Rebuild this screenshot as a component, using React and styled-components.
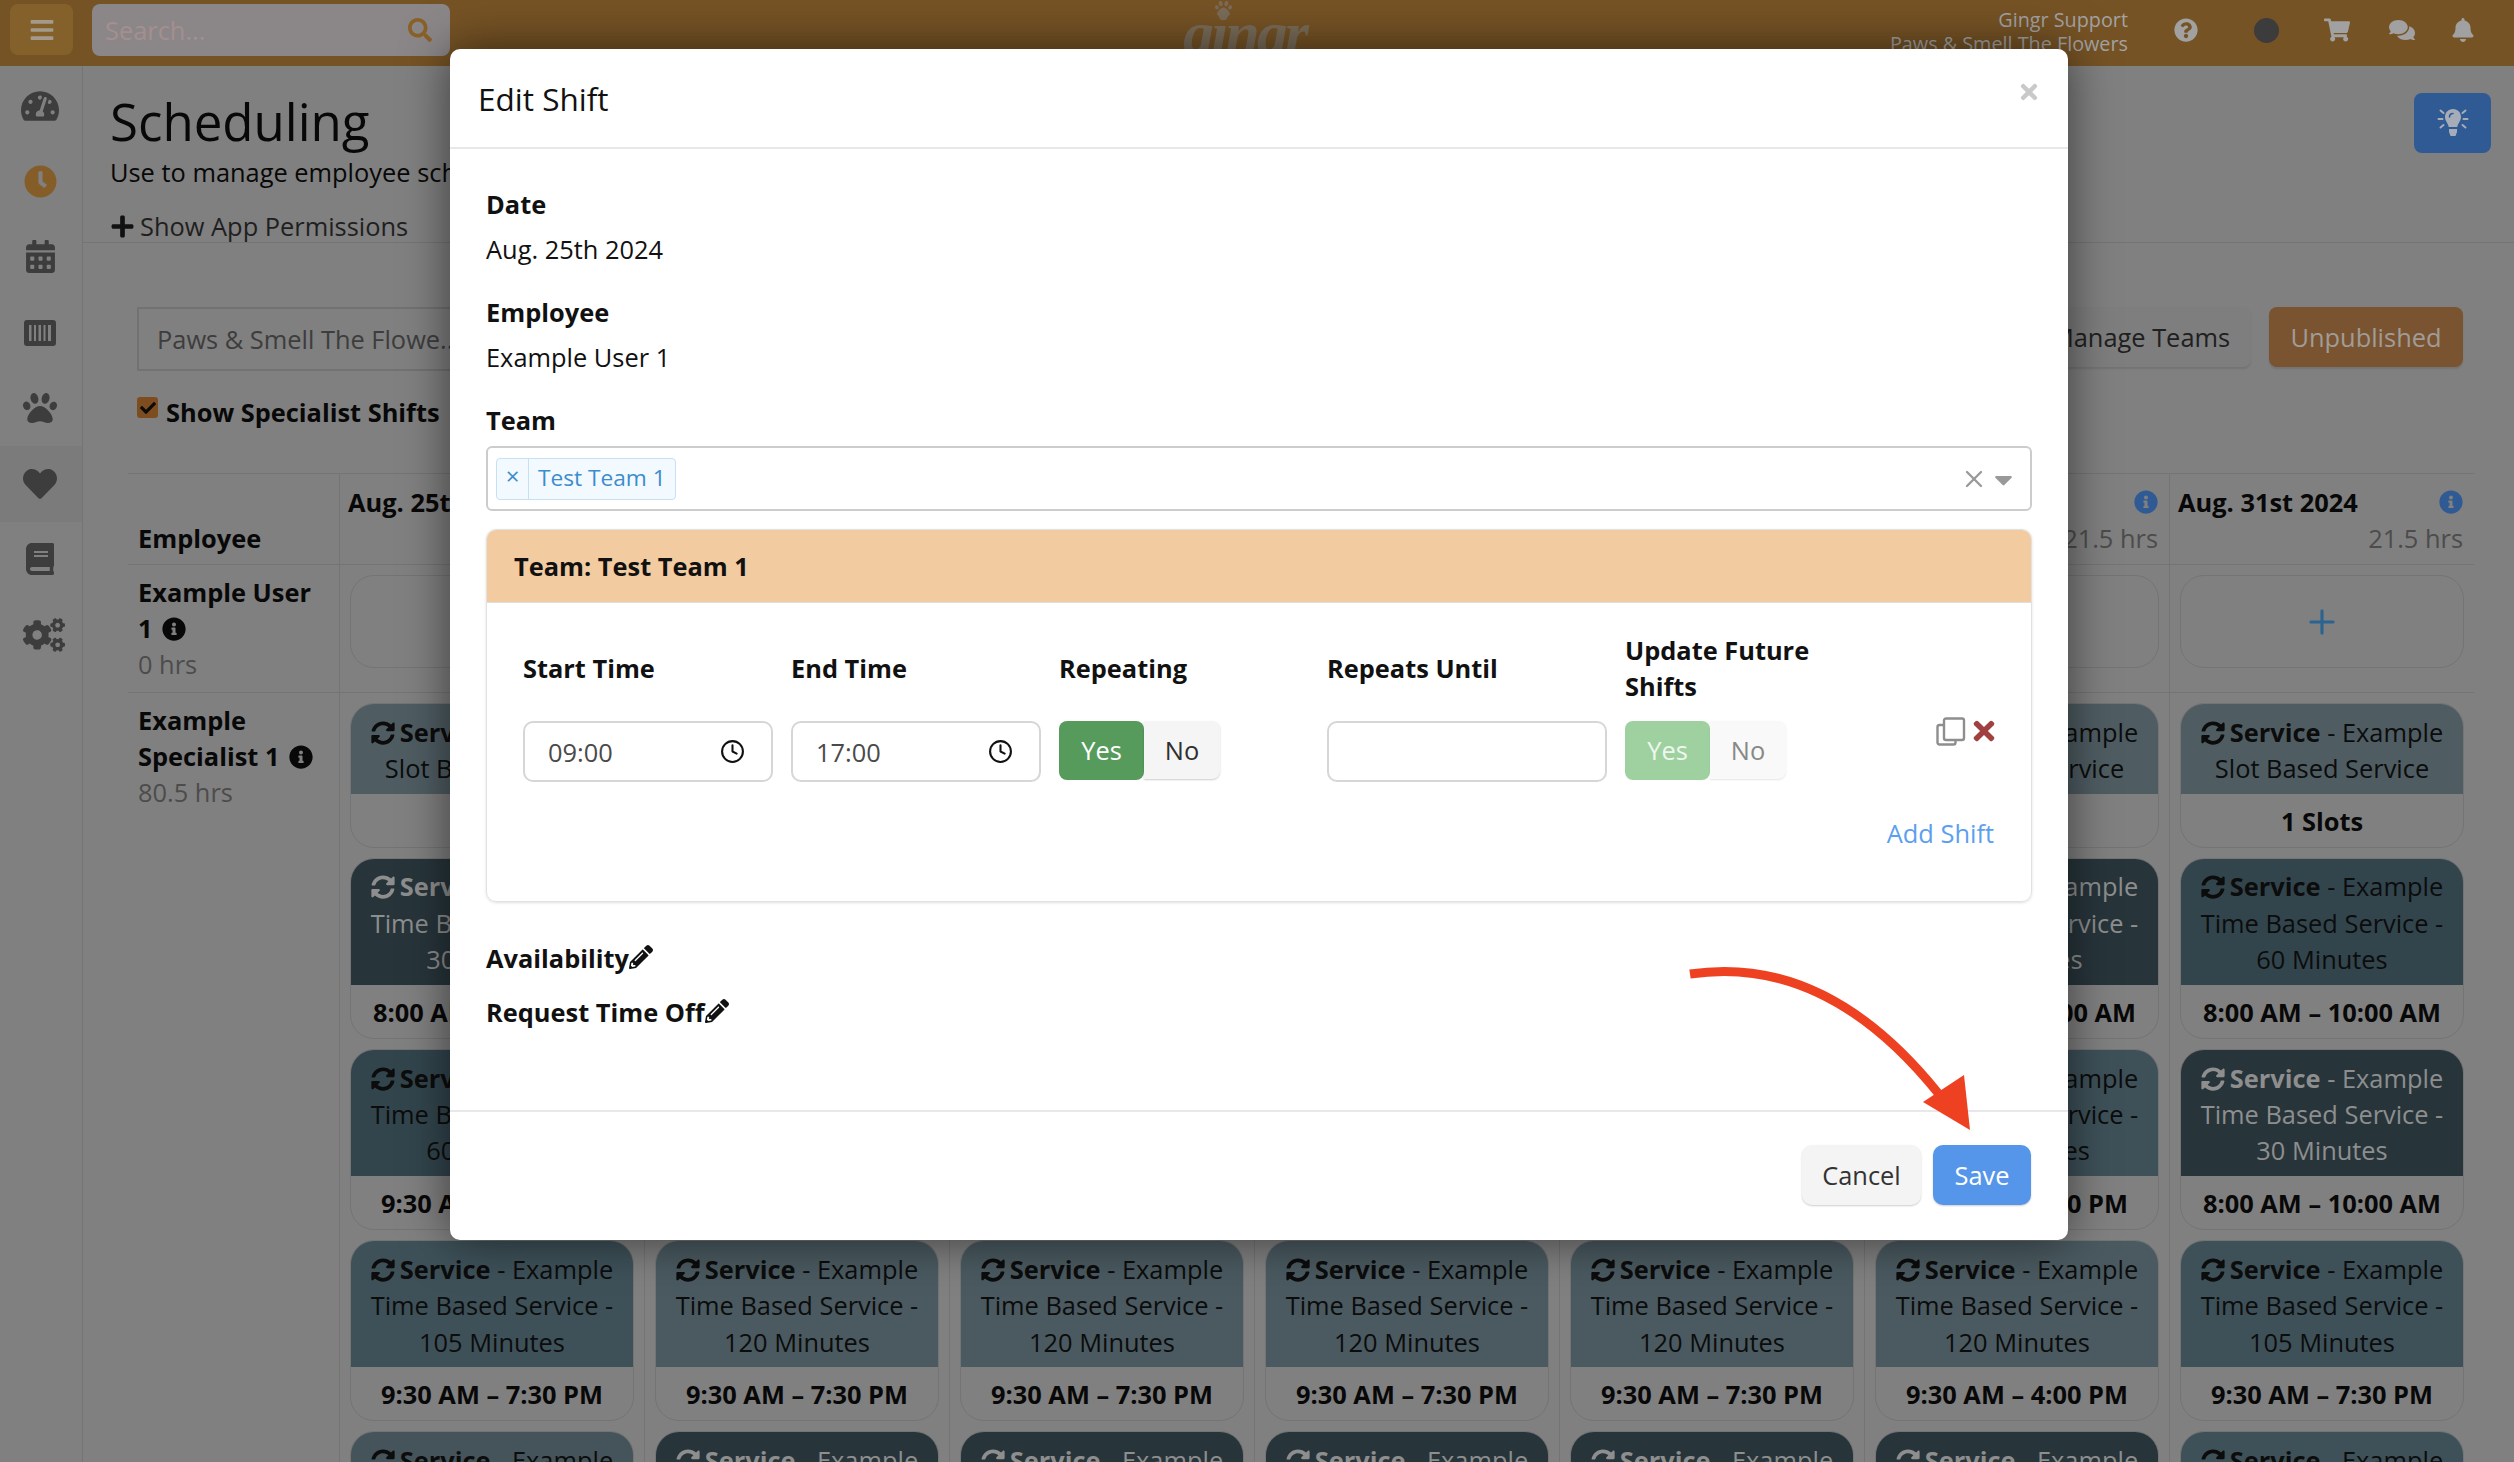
import styled, { createGlobalStyle } from 'styled-components';
import {
  FaBars, FaSearch, FaQuestionCircle, FaShoppingCart, FaComments, FaBell, FaTachometerAlt, FaClock,
  FaCalendarAlt, FaPaw, FaHeart, FaBook, FaCogs, FaPlus, FaInfoCircle, FaSyncAlt, FaTimes, FaCheck,
  FaPencilAlt, FaCaretDown,
} from 'react-icons/fa';
import { FiClock, FiPlus, FiX } from 'react-icons/fi';

const GlobalStyle = createGlobalStyle`
  html, body { margin: 0; padding: 0; }
  body {
    width: 2514px;
    height: 1462px;
    overflow: hidden;
    background: #808080;
    font-family: "Open Sans", "Noto Sans", sans-serif;
    font-size: 25.4px;
    line-height: 36px;
    color: #080808;
  }
  * { box-sizing: border-box; }
`;

const Page = styled.div`
  position: relative;
  width: 2514px;
  height: 1462px;
  overflow: hidden;
`;

const TopBar = styled.header`
  display: flex;
  align-items: flex-start;
  height: 66px;
  padding: 4px 6px 0 10px;
  background: #765325;
`;

const MenuButton = styled.div`
  display: flex;
  align-items: center;
  justify-content: center;
  width: 63px;
  height: 51px;
  border-radius: 8px;
  background: #84602a;
  color: #a39a8b;
  font-size: 26px;
`;

const SearchBox = styled.div`
  display: flex;
  align-items: center;
  justify-content: space-between;
  width: 358px;
  height: 52px;
  margin-left: 19px;
  padding: 0 18px 0 13px;
  border-radius: 8px;
  background: #8b8688;
  color: #a58f8f;
  svg { color: #8a6228; font-size: 24px; }
`;

const Logo = styled.div`
  position: relative;
  margin-left: 733px;
  width: 119px;
  height: 60px;
  color: #7a6c59;
  font-family: "Liberation Serif", serif;
  font-style: italic;
  font-weight: 700;
  font-size: 62px;
  line-height: 58px;
  letter-spacing: -3px;
  svg {
    position: absolute;
    left: 32px;
    top: -4px;
    font-size: 17px;
  }
`;

const UserInfo = styled.div`
  margin-left: auto;
  margin-top: 4px;
  color: #a3a3a3;
  font-size: 19.8px;
  line-height: 24px;
  text-align: right;
  white-space: nowrap;
`;

const TopIcon = styled.div`
  display: flex;
  align-items: center;
  justify-content: center;
  width: ${(p) => p.$w}px;
  height: 52px;
  color: #a1a1a1;
  font-size: ${(p) => p.$size || 26}px;
`;

const Avatar = styled.span`
  width: 25px;
  height: 25px;
  border-radius: 50%;
  background: #3c3c3c;
`;

const Layout = styled.div`
  display: flex;
  height: 1396px;
`;

const Sidebar = styled.nav`
  flex: 0 0 83px;
  padding-top: 2px;
  border-right: 1px solid #747474;
`;

const NavItem = styled.div`
  display: flex;
  align-items: center;
  justify-content: center;
  height: 75.6px;
  padding-right: 2px;
  padding-left: ${(p) => p.$shift || 0}px;
  color: ${(p) => (p.$active ? '#845d28' : '#3d3d3d')};
  background: ${(p) => (p.$selected ? '#7b7b7b' : 'transparent')};
  font-size: ${(p) => p.$size || 32}px;
`;

const Main = styled.main`
  flex: 1;
  min-width: 0;
`;

const PageHeader = styled.div`
  display: flex;
  justify-content: space-between;
  height: 177px;
  padding: 19px 23px 0 27px;
  border-bottom: 1px solid #747474;
`;

const Title = styled.h1`
  margin: 0;
  font-size: 51px;
  font-weight: 400;
  line-height: 72px;
`;

const Subtitle = styled.p`
  margin: -3px 0 0;
`;

const PermissionLink = styled.div`
  display: flex;
  align-items: center;
  gap: 5px;
  margin-top: 18px;
  color: #1f1f1f;
  svg { font-size: 25px; color: #111; }
`;

const TipButton = styled.div`
  display: flex;
  align-items: center;
  justify-content: center;
  width: 77px;
  height: 60px;
  margin-top: 8px;
  border-radius: 8px;
  background: #2f5a94;
`;

const Controls = styled.div`
  height: 230px;
  padding: 64px 51px 0 54px;
`;

const ControlRow = styled.div`
  display: flex;
  justify-content: space-between;
`;

const LocationSelect = styled.div`
  width: 340px;
  height: 64px;
  padding: 12px 18px;
  border: 2px solid #727272;
  color: #3d3d3d;
  white-space: nowrap;
`;

const ControlButtons = styled.div`
  display: flex;
  gap: 18px;
`;

const PageButton = styled.div`
  width: ${(p) => p.$w}px;
  height: 60px;
  border-radius: 8px;
  background: ${(p) => p.$bg};
  color: ${(p) => p.$color};
  box-shadow: 0 2px 2px rgba(0, 0, 0, 0.1);
  line-height: 61px;
  text-align: center;
`;

const CheckRow = styled.label`
  display: flex;
  align-items: center;
  gap: 8px;
  margin-top: 23px;
  font-weight: 700;
`;

const CheckBox = styled.span`
  display: flex;
  align-items: center;
  justify-content: center;
  width: 21px;
  height: 21px;
  margin-top: -9px;
  border-radius: 3px;
  background: #7d4d20;
  color: #0b0b0b;
  font-size: 16px;
`;

const Table = styled.div`
  margin-left: 45px;
  width: 2346px;
  border-top: 1px solid #747474;
`;

const Row = styled.div`
  display: grid;
  grid-template-columns: 211px repeat(7, 305px);
  height: ${(p) => (p.$h ? `${p.$h}px` : 'auto')};
  border-bottom: ${(p) => (p.$last ? 'none' : '1px solid #747474')};
`;

const EmployeeHead = styled.div`
  align-self: end;
  padding: 0 0 8px 10px;
  font-weight: 700;
`;

const DayCell = styled.div`
  display: flex;
  flex-wrap: wrap;
  justify-content: space-between;
  align-content: flex-start;
  padding: 10px 11px 0 8px;
  border-left: 1px solid #747474;
`;

const DayName = styled.span`
  font-weight: 700;
`;

const DayInfo = styled.span`
  display: flex;
  align-items: center;
  color: #2f5a94;
  font-size: 24px;
`;

const DayHours = styled.span`
  flex: 0 0 100%;
  color: #4c4c4c;
  text-align: right;
`;

const EmployeeCell = styled.div`
  padding: 9px 22px 0 10px;
`;

const EmployeeName = styled.div`
  font-weight: 700;
  svg { margin-left: 3px; font-size: 24px; vertical-align: -3px; }
`;

const EmployeeHours = styled.div`
  color: #4c4c4c;
`;

const CardCell = styled.div`
  display: flex;
  flex-direction: column;
  gap: 10px;
  padding: 10px 10px 0;
  border-left: 1px solid #747474;
  overflow: hidden;
`;

const EmptyCard = styled.div`
  display: flex;
  align-items: center;
  justify-content: center;
  height: 93px;
  border: 1px solid #747474;
  border-radius: 24px;
  color: #2b6391;
  font-size: 38px;
`;

const Card = styled.div`
  flex: none;
  border: 1px solid #747474;
  border-radius: 24px;
  overflow: hidden;
  text-align: center;
`;

const CardTop = styled.div`
  padding: 9.5px 10px 7.5px;
  background: ${(p) => p.$bg};
  color: ${(p) => (p.$light ? '#8e8e8e' : '#0c0c0c')};
  line-height: 36.4px;
  svg { margin-right: 5px; font-size: 24px; vertical-align: -3px; }
`;

const CardBottom = styled.div`
  height: 53px;
  font-weight: 700;
  line-height: 54px;
`;

const Modal = styled.div`
  position: absolute;
  left: 450px;
  top: 49px;
  display: flex;
  flex-direction: column;
  width: 1618px;
  height: 1191px;
  border-radius: 10px;
  background: #fff;
  box-shadow: 0 0 48px rgba(0, 0, 0, 0.55);
  color: #111;
`;

const ModalHeader = styled.div`
  display: flex;
  justify-content: space-between;
  height: 100px;
  padding: 32px 27px 0 28px;
  border-bottom: 2px solid #e8e8e8;
`;

const ModalTitle = styled.div`
  font-size: 31.5px;
`;

const CloseIcon = styled.div`
  margin-top: -4px;
  color: #c9c9c9;
  font-size: 24px;
`;

const ModalBody = styled.div`
  padding: 37px 36px 0 36px;
`;

const Label = styled.div`
  font-weight: 700;
  margin-bottom: 9px;
`;

const Value = styled.div`
  margin-bottom: 27px;
`;

const TeamLabel = styled(Label)`
  margin-bottom: 8px;
`;

const TeamSelect = styled.div`
  display: flex;
  align-items: center;
  justify-content: space-between;
  height: 65px;
  padding: 0 12px 0 8px;
  border: 2px solid #cccccc;
  border-radius: 6px;
`;

const Tag = styled.div`
  display: flex;
  width: 180px;
  height: 42px;
  border: 1px solid #c6e1f5;
  border-radius: 4px;
  background: #f2f9ff;
  color: #3d8ccc;
  font-size: 22.7px;
  line-height: 38px;
`;

const TagRemove = styled.span`
  width: 32px;
  border-right: 1px solid #c6e1f5;
  font-size: 24px;
  line-height: 34px;
  text-align: center;
`;

const TagText = styled.span`
  padding-left: 9px;
`;

const SelectTools = styled.div`
  display: flex;
  align-items: center;
  gap: 1px;
  color: #999;
  font-size: 28px;
`;

const ToolCaret = styled.span`
  display: flex;
  font-size: 29px;
  margin-top: 2px;
`;

const TeamPanel = styled.div`
  height: 373px;
  margin-top: 18px;
  border: 1px solid #e2e2e2;
  border-radius: 10px;
  box-shadow: 0 1px 3px rgba(0, 0, 0, 0.12);
  overflow: hidden;
`;

const TeamPanelHead = styled.div`
  height: 73px;
  padding-left: 27px;
  background: #f3cba0;
  border-bottom: 1px solid #e2ddd8;
  font-weight: 700;
  line-height: 73px;
`;

const TeamPanelBody = styled.div`
  padding: 29px 37px 0 36px;
`;

const ShiftGrid = styled.div`
  display: grid;
  grid-template-columns: 250px 250px 250px 280px 1fr;
  grid-template-rows: 72px 61px;
  column-gap: 18px;
  row-gap: 17px;
  align-items: center;
`;

const ShiftLabel = styled.div`
  font-weight: 700;
`;

const ShiftLabelWide = styled(ShiftLabel)`
  width: 230px;
`;

const TimeInput = styled.div`
  display: flex;
  align-items: center;
  justify-content: space-between;
  height: 61px;
  padding: 0 26px 0 23px;
  border: 2px solid #d6d6d6;
  border-radius: 10px;
  color: #4a4a4a;
  svg { color: #111; font-size: 25px; }
`;

const ToolCell = styled.div`
  display: flex;
  justify-content: space-between;
  align-self: start;
`;

const Toggle = styled.div`
  display: flex;
  align-self: start;
`;

const ToggleYes = styled.div`
  width: 85px;
  height: 59px;
  border-radius: 8px;
  background: ${(p) => (p.$faded ? '#9fd1a0' : '#569b5c')};
  color: ${(p) => (p.$faded ? '#eef7ee' : '#fff')};
  line-height: 59px;
  text-align: center;
`;

const ToggleNo = styled.div`
  width: 76px;
  height: 58px;
  border-radius: 0 8px 8px 0;
  background: ${(p) => (p.$faded ? '#f9f9f9' : '#f5f5f5')};
  box-shadow: 0 1px 2px rgba(0, 0, 0, ${(p) => (p.$faded ? 0.1 : 0.2)});
  color: ${(p) => (p.$faded ? '#888' : '#2f2f2f')};
  line-height: 59px;
  text-align: center;
`;

const RowTools = styled.div`
  display: flex;
  justify-content: flex-end;
  align-items: center;
  align-self: start;
  gap: 3px;
  margin: -5px -5px 0 0;
  color: #a04040;
  font-size: 30px;
`;

const AddShift = styled.div`
  margin-top: 33px;
  color: #5ba0ef;
  text-align: right;
`;

const EditLine = styled.div`
  display: flex;
  align-items: center;
  margin-top: ${(p) => p.$top}px;
  font-weight: 700;
  svg { font-size: 24px; margin-top: -3px; }
`;

const ModalFooter = styled.div`
  display: flex;
  justify-content: flex-end;
  gap: 12px;
  margin-top: auto;
  height: 130px;
  padding: 33px 37px 0 0;
  border-top: 2px solid #e8e8e8;
`;

const FooterButton = styled.div`
  width: ${(p) => p.$w}px;
  height: 60px;
  border-radius: 10px;
  background: ${(p) => p.$bg};
  color: ${(p) => p.$color};
  box-shadow: 0 1px 2px rgba(0, 0, 0, 0.2);
  line-height: 60px;
  text-align: center;
`;

const Annotation = styled.svg`
  position: absolute;
  left: 1680px;
  top: 960px;
`;

const BarcodeIcon = () => (
  <svg width="32" height="26" viewBox="0 0 32 26" fill="currentColor">
    <path fillRule="evenodd" d="M3 0h26a3 3 0 0 1 3 3v20a3 3 0 0 1-3 3H3a3 3 0 0 1-3-3V3a3 3 0 0 1 3-3zM5 5v16h2.5V5zM10 5v16h2V5zM14.5 5v16h2.5V5zM19.5 5v16h2V5zM24 5v16h3V5z" />
  </svg>
);

const CopyIcon = () => (
  <svg width="30" height="29" viewBox="0 0 30 29" fill="#ffffff" stroke="#8e8e8e" strokeWidth="2.4">
    <rect x="1.5" y="8" width="18" height="19.5" rx="2" />
    <rect x="8" y="1.500" width="20" height="21.500" rx="2" />
  </svg>
);

const BulbIcon = () => (
  <svg width="32" height="30" viewBox="0 0 32 30" fill="none" stroke="#a6adb8" strokeWidth="2" strokeLinecap="round">
    <path d="M1.500 11h4M26.500 11h4M3.500 2.500l3 2.500M28.500 2.500l-3 2.500M3.500 19.500l3-2.500M28.500 19.500l-3-2.500" />
    <path fill="#a6adb8" stroke="none" d="M16 1c-5 0-8 3.800-8 8 0 4 3 6 3.700 10h8.600C21 15 24 13 24 9c0-4.200-3-8-8-8z" />
    <path stroke="#2f5a94" strokeWidth="1.600" d="M12.500 9c0-2 1.500-3.500 3.500-3.500" />
    <path fill="#a6adb8" stroke="none" d="M12 21h8v3l-1.500 4h-5L12 24z" />
  </svg>
);

const navIcons = [
  { icon: <FaTachometerAlt />, size: 38 },
  { icon: <FaClock />, size: 33, active: true },
  { icon: <FaCalendarAlt />, size: 33 },
  { icon: <BarcodeIcon /> },
  { icon: <FaPaw />, size: 34 },
  { icon: <FaHeart />, size: 34, selected: true },
  { icon: <FaBook />, size: 32 },
  { icon: <FaCogs />, size: 42, shift: 8 },
];

const days = ['25th', '26th', '27th', '28th', '29th', '30th', '31st'];

const SLOT = { bg: '#4f5d63', name: 'Slot Based Service', foot: '1 Slots' };
const time = (mins, bg, foot, light) => ({ bg, light, name: `Time Based Service - ${mins} Minutes`, foot });

const MORNING = '8:00 AM – 10:00 AM';
const FULL = '9:30 AM – 7:30 PM';
const SHORT = '9:30 AM – 4:00 PM';
const DARK = '#27353b';
const DEEP = '#32454d';
const MID = '#3e5159';
const PALE = '#4a5a60';

const columns = [
  [SLOT, time(30, DARK, MORNING, true), time(60, DEEP, FULL), time(105, MID, FULL), time(105, '#44545a', FULL)],
  [SLOT, time(30, DARK, MORNING, true), time(60, DEEP, FULL), time(120, PALE, FULL), time(30, DARK, FULL, true)],
  [SLOT, time(30, DARK, MORNING, true), time(60, DEEP, FULL), time(120, PALE, FULL), time(30, DARK, FULL, true)],
  [SLOT, time(30, DARK, MORNING, true), time(60, DEEP, FULL), time(120, PALE, FULL), time(30, DARK, FULL, true)],
  [SLOT, time(30, DARK, MORNING, true), time(60, DEEP, FULL), time(120, PALE, FULL), time(30, DARK, FULL, true)],
  [SLOT, time(30, DARK, MORNING, true), time(105, MID, FULL), time(120, PALE, SHORT), time(30, DARK, FULL, true)],
  [SLOT, time(60, DEEP, MORNING), time(30, DARK, MORNING, true), time(105, MID, FULL), time(105, MID, FULL)],
];

const ShiftCard = ({ card }) => (
  <Card>
    <CardTop $bg={card.bg} $light={card.light}>
      <FaSyncAlt />
      <b>Service</b> - Example {card.name}
    </CardTop>
    <CardBottom>{card.foot}</CardBottom>
  </Card>
);

export default function App() {
  return (
    <Page>
      <GlobalStyle />
      <TopBar>
        <MenuButton><FaBars /></MenuButton>
        <SearchBox>
          Search...
          <FaSearch />
        </SearchBox>
        <Logo>
          <FaPaw />
          gingr
        </Logo>
        <UserInfo>
          Gingr Support
          <br />
          Paws &amp; Smell The Flowers
        </UserInfo>
        <TopIcon $w={116} $size={24}><FaQuestionCircle /></TopIcon>
        <TopIcon $w={44}><Avatar /></TopIcon>
        <TopIcon $w={98} $size={26}><FaShoppingCart /></TopIcon>
        <TopIcon $w={32} $size={26}><FaComments /></TopIcon>
        <TopIcon $w={90} $size={24}><FaBell /></TopIcon>
      </TopBar>

      <Layout>
        <Sidebar>
          {navIcons.map((item, i) => (
            <NavItem key={i} $size={item.size} $active={item.active} $selected={item.selected} $shift={item.shift}>
              {item.icon}
            </NavItem>
          ))}
        </Sidebar>

        <Main>
          <PageHeader>
            <div>
              <Title>Scheduling</Title>
              <Subtitle>Use to manage employee schedules</Subtitle>
              <PermissionLink>
                <FaPlus />
                Show App Permissions
              </PermissionLink>
            </div>
            <TipButton><BulbIcon /></TipButton>
          </PageHeader>

          <Controls>
            <ControlRow>
              <LocationSelect>Paws &amp; Smell The Flowe..</LocationSelect>
              <ControlButtons>
                <PageButton $w={221} $bg="#7e7e7e" $color="#202020">Manage Teams</PageButton>
                <PageButton $w={194} $bg="#7a5430" $color="#a09c98">Unpublished</PageButton>
              </ControlButtons>
            </ControlRow>
            <CheckRow>
              <CheckBox><FaCheck /></CheckBox>
              Show Specialist Shifts
            </CheckRow>
          </Controls>

          <Table>
            <Row $h={91}>
              <EmployeeHead>Employee</EmployeeHead>
              {days.map((day) => (
                <DayCell key={day}>
                  <DayName>Aug. {day} 2024</DayName>
                  <DayInfo><FaInfoCircle /></DayInfo>
                  <DayHours>21.5 hrs</DayHours>
                </DayCell>
              ))}
            </Row>
            <Row $h={128}>
              <EmployeeCell>
                <EmployeeName>Example User 1 <FaInfoCircle /></EmployeeName>
                <EmployeeHours>0 hrs</EmployeeHours>
              </EmployeeCell>
              {days.map((day) => (
                <CardCell key={day}>
                  <EmptyCard><FiPlus /></EmptyCard>
                </CardCell>
              ))}
            </Row>
            <Row $last>
              <EmployeeCell>
                <EmployeeName>Example Specialist 1 <FaInfoCircle /></EmployeeName>
                <EmployeeHours>80.5 hrs</EmployeeHours>
              </EmployeeCell>
              {columns.map((cards, i) => (
                <CardCell key={i}>
                  {cards.map((card, j) => <ShiftCard key={j} card={card} />)}
                </CardCell>
              ))}
            </Row>
          </Table>
        </Main>
      </Layout>

      <Modal>
        <ModalHeader>
          <ModalTitle>Edit Shift</ModalTitle>
          <CloseIcon><FaTimes /></CloseIcon>
        </ModalHeader>
        <ModalBody>
          <Label>Date</Label>
          <Value>Aug. 25th 2024</Value>
          <Label>Employee</Label>
          <Value>Example User 1</Value>
          <TeamLabel>Team</TeamLabel>
          <TeamSelect>
            <Tag>
              <TagRemove>×</TagRemove>
              <TagText>Test Team 1</TagText>
            </Tag>
            <SelectTools>
              <FiX />
              <ToolCaret><FaCaretDown /></ToolCaret>
            </SelectTools>
          </TeamSelect>
          <TeamPanel>
            <TeamPanelHead>Team: Test Team 1</TeamPanelHead>
            <TeamPanelBody>
              <ShiftGrid>
                <ShiftLabel>Start Time</ShiftLabel>
                <ShiftLabel>End Time</ShiftLabel>
                <ShiftLabel>Repeating</ShiftLabel>
                <ShiftLabel>Repeats Until</ShiftLabel>
                <ShiftLabelWide>Update Future Shifts</ShiftLabelWide>
                <TimeInput>09:00<FiClock /></TimeInput>
                <TimeInput>17:00<FiClock /></TimeInput>
                <Toggle>
                  <ToggleYes>Yes</ToggleYes>
                  <ToggleNo>No</ToggleNo>
                </Toggle>
                <TimeInput />
                <ToolCell>
                  <Toggle>
                    <ToggleYes $faded>Yes</ToggleYes>
                    <ToggleNo $faded>No</ToggleNo>
                  </Toggle>
                  <RowTools>
                    <CopyIcon />
                    <FaTimes />
                  </RowTools>
                </ToolCell>
              </ShiftGrid>
              <AddShift>Add Shift</AddShift>
            </TeamPanelBody>
          </TeamPanel>
          <EditLine $top={38}>Availability<FaPencilAlt /></EditLine>
          <EditLine $top={18}>Request Time Off<FaPencilAlt /></EditLine>
        </ModalBody>
        <ModalFooter>
          <FooterButton $w={119} $bg="#f4f4f4" $color="#333">Cancel</FooterButton>
          <FooterButton $w={98} $bg="#5596ea" $color="#fff">Save</FooterButton>
        </ModalFooter>
      </Modal>

      <Annotation width="300" height="180" viewBox="0 0 300 180" fill="none">
        <path d="M10 14C90 2 175 30 258 133" stroke="#ee4122" strokeWidth="9" />
        <path d="M284 115L243 142L290 170Z" fill="#ee4122" />
      </Annotation>
    </Page>
  );
}
